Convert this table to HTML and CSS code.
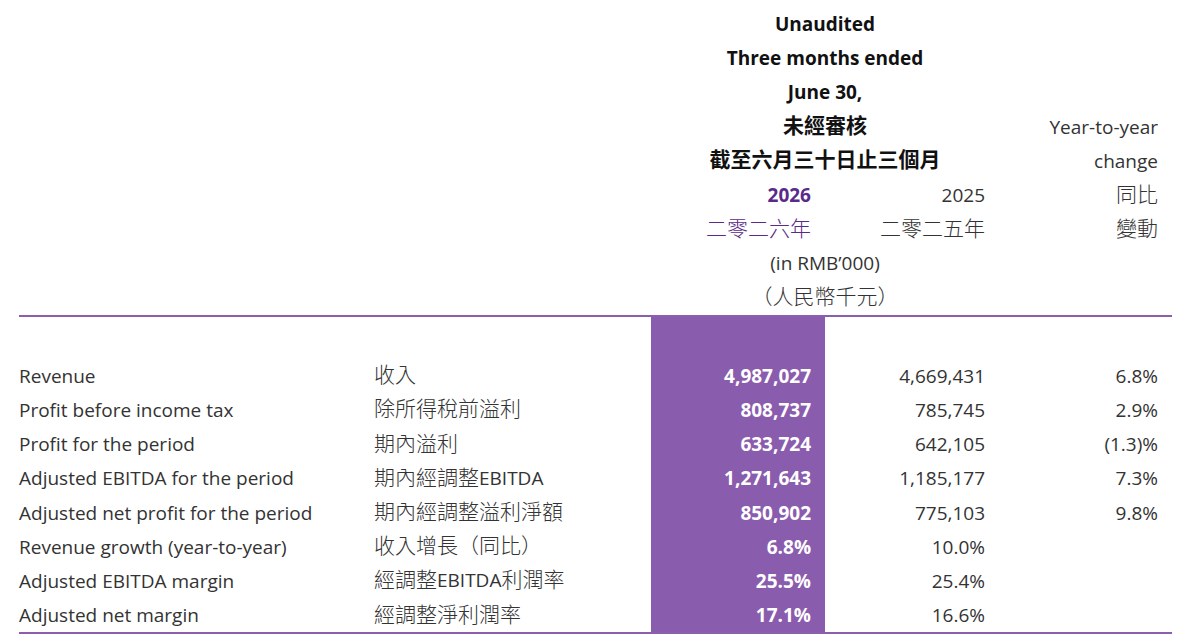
FILE: index.html
```html
<!DOCTYPE html>
<html lang="zh-Hant">
<head>
<meta charset="utf-8">
<title>Financial Summary</title>
<link rel="stylesheet" href="styles.css">
</head>
<body>
<table class="fin">
  <colgroup>
    <col class="c-en"><col class="c-zh"><col class="c-cur"><col class="c-prev"><col class="c-yoy">
  </colgroup>
  <thead>
    <tr><th></th><th></th><th colspan="2" class="grp">Unaudited</th><th></th></tr>
    <tr><th></th><th></th><th colspan="2" class="grp">Three months ended</th><th></th></tr>
    <tr><th></th><th></th><th colspan="2" class="grp">June 30,</th><th></th></tr>
    <tr><th></th><th></th><th colspan="2" class="grp zh">未經審核</th><th class="yoy">Year-to-year</th></tr>
    <tr><th></th><th></th><th colspan="2" class="grp zh">截至六月三十日止三個月</th><th class="yoy">change</th></tr>
    <tr><th></th><th></th><th class="cur-h">2026</th><th class="prev-h">2025</th><th class="yoy zh">同比</th></tr>
    <tr><th></th><th></th><th class="cur-h light zh">二零二六年</th><th class="prev-h zh">二零二五年</th><th class="yoy zh">變動</th></tr>
    <tr><th></th><th></th><th colspan="2" class="unit">(in RMB’000)</th><th></th></tr>
    <tr class="last-head"><th></th><th></th><th colspan="2" class="unit zh">（人民幣千元）</th><th></th></tr>
  </thead>
  <tbody>
    <tr class="spacer"><td></td><td></td><td class="cur"></td><td></td><td></td></tr>
    <tr><td>Revenue</td><td class="zh">收入</td><td class="cur">4,987,027</td><td class="num">4,669,431</td><td class="num">6.8%</td></tr>
    <tr><td>Profit before income tax</td><td class="zh">除所得稅前溢利</td><td class="cur">808,737</td><td class="num">785,745</td><td class="num">2.9%</td></tr>
    <tr><td>Profit for the period</td><td class="zh">期內溢利</td><td class="cur">633,724</td><td class="num">642,105</td><td class="num">(1.3)%</td></tr>
    <tr><td>Adjusted EBITDA for the period</td><td class="zh">期內經調整<span class="lat">EBITDA</span></td><td class="cur">1,271,643</td><td class="num">1,185,177</td><td class="num">7.3%</td></tr>
    <tr><td>Adjusted net profit for the period</td><td class="zh">期內經調整溢利淨額</td><td class="cur">850,902</td><td class="num">775,103</td><td class="num">9.8%</td></tr>
    <tr><td>Revenue growth (year-to-year)</td><td class="zh">收入增長（同比）</td><td class="cur">6.8%</td><td class="num">10.0%</td><td class="num"></td></tr>
    <tr><td>Adjusted EBITDA margin</td><td class="zh">經調整<span class="lat">EBITDA</span>利潤率</td><td class="cur">25.5%</td><td class="num">25.4%</td><td class="num"></td></tr>
    <tr class="last"><td>Adjusted net margin</td><td class="zh">經調整淨利潤率</td><td class="cur">17.1%</td><td class="num">16.6%</td><td class="num"></td></tr>
  </tbody>
</table>
</body>
</html>
```
FILE: styles.css
```css
html, body {
  margin: 0;
  padding: 0;
  background: #ffffff;
}
body {
  padding: 7px 0 0 19px;
  font-family: "Open Sans", "Noto Sans CJK TC", sans-serif;
  font-size: 19px;
  color: #333333;
}
.fin {
  border-collapse: collapse;
  table-layout: fixed;
  width: 1153px;
}
.c-en { width: 355px; }
.c-zh { width: 277px; }
.c-cur { width: 174px; }
.c-prev { width: 174px; }
.c-yoy { width: 173px; }

.fin th, .fin td {
  padding: 0;
  height: 34.2px;
  line-height: 26px;
  vertical-align: middle;
  white-space: nowrap;
  font-weight: normal;
  text-align: left;
}
.fin th {
  color: #333333;
}
.fin .zh {
  font-family: "Noto Sans CJK TC", sans-serif;
  font-size: 21px;
  font-weight: 300;
  height: 29.2px;
  padding-bottom: 5px;
}
.fin .lat {
  font-family: "Open Sans", sans-serif;
  font-size: 19px;
  font-weight: normal;
  line-height: 1;
}
.fin th.grp {
  text-align: center;
  font-weight: 700;
  color: #111111;
}
.fin th.unit {
  text-align: center;
}
.fin th.yoy,
.fin th.prev-h,
.fin th.cur-h {
  text-align: right;
  padding-right: 14px;
}
.fin th.cur-h {
  color: #5a2a88;
  font-weight: 700;
}
.fin th.cur-h.light {
  font-weight: 300;
}
.last-head th {
  border-bottom: 2px solid #8b5fae;
}
.spacer td {
  height: 42px;
}
.fin td.cur {
  background: #8a5cad;
  color: #ffffff;
  font-weight: 700;
  text-align: right;
  padding-right: 14px;
}
.fin td.num {
  text-align: right;
  padding-right: 14px;
}
.last td {
  border-bottom: 2px solid #8b5fae;
}
```
